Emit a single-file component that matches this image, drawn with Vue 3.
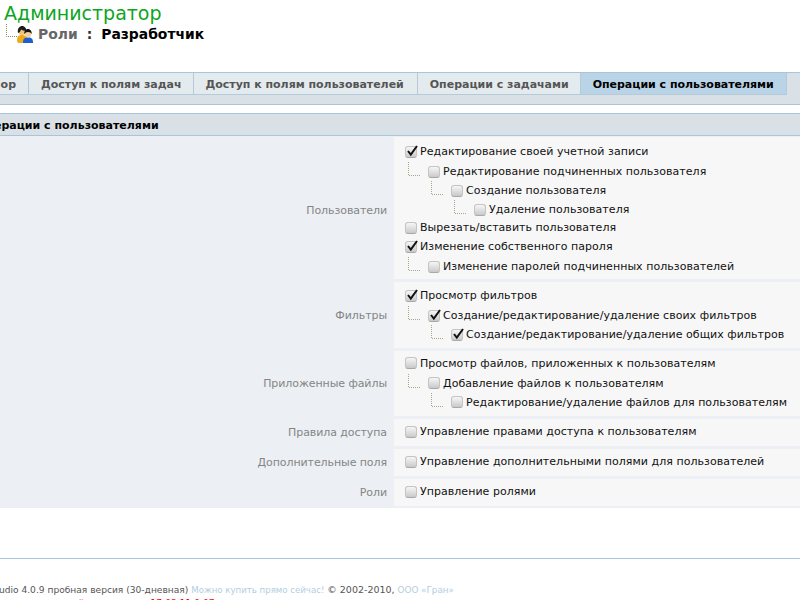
<script setup>
const tabs = [
  { label: 'ор', cls: 'first' },
  { label: 'Доступ к полям задач', cls: 'narrow' },
  { label: 'Доступ к полям пользователей', cls: 'wide' },
  { label: 'Операции с задачами', cls: 'narrow' },
  { label: 'Операции с пользователями', cls: 'active' },
]
const groups = [
  { label: 'Пользователи', h: 142, cls: 'tall', items: [
    { t: 'Редактирование своей учетной записи', l: 0, c: true },
    { t: 'Редактирование подчиненных пользователя', l: 1 },
    { t: 'Создание пользователя', l: 2 },
    { t: 'Удаление пользователя', l: 3 },
    { t: 'Вырезать/вставить пользователя', l: 0 },
    { t: 'Изменение собственного пароля', l: 0, c: true },
    { t: 'Изменение паролей подчиненных пользователей', l: 1 },
  ]},
  { label: 'Фильтры', h: 66, items: [
    { t: 'Просмотр фильтров', l: 0, c: true },
    { t: 'Создание/редактирование/удаление своих фильтров', l: 1, c: true },
    { t: 'Создание/редактирование/удаление общих фильтров', l: 2, c: true },
  ]},
  { label: 'Приложенные файлы', h: 65, cls: 'low', items: [
    { t: 'Просмотр файлов, приложенных к пользователям', l: 0 },
    { t: 'Добавление файлов к пользователям', l: 1 },
    { t: 'Редактирование/удаление файлов для пользователям', l: 2 },
  ]},
  { label: 'Правила доступа', h: 27, cls: 'low', items: [{ t: 'Управление правами доступа к пользователям', l: 0 }] },
  { label: 'Дополнительные поля', h: 27, cls: 'low', items: [{ t: 'Управление дополнительными полями для пользователей', l: 0 }] },
  { label: 'Роли', h: 27, cls: 'low', items: [{ t: 'Управление ролями', l: 0 }] },
]
</script>

<template>
  <div class="page">
    <header class="head">
      <h1 class="title">Администратор</h1>
      <div class="crumb">
        <svg class="elbow" width="12" height="13" viewBox="0 0 12 13"><path d="M.5 0v12.500H12" fill="none" stroke="#8a8a70" stroke-dasharray="1 1"/></svg>
        <svg class="roles" width="16" height="17" viewBox="0 0 16 17">
          <path d="M0 15c0-4 1-6 5-6s5 2 5 6l-1 2H1z" fill="#f0ac18"/>
          <circle cx="5" cy="5.500" r="3.500" fill="#f5c27a"/>
          <path d="M1 7C0 2 3 0 5 0s5 2 4 5C7 5 5 4 4 3.500 3.500 5 3 6.500 1 7z" fill="#1c1c1c"/>
          <path d="M6 17c0-4 1-5.500 5-5.500s5 1.500 5 5.500z" fill="#1d5fd0"/>
          <circle cx="11" cy="8" r="3.200" fill="#f7cf9a"/>
          <path d="M7.300 8c-.3-3.500 2-5 3.700-5s4 1.500 3.700 5c-1-1.300-1.500-2-3.700-2S8.500 6.700 7.300 8z" fill="#111"/>
        </svg>
        <span class="crumb-link">Роли</span>
        <span class="crumb-sep">:</span>
        <span class="crumb-cur">Разработчик</span>
      </div>
    </header>

    <nav class="tabbar">
      <div class="tabs">
        <div v-for="t in tabs" :key="t.label" class="tab" :class="t.cls">{{ t.label }}</div>
      </div>
    </nav>

    <section class="panel">
      <h2 class="panel-title"><span class="panel-text">Операции с пользователями</span></h2>
      <div class="groups">
        <div v-for="g in groups" :key="g.label" class="group" :class="g.cls" :style="{ height: g.h + 'px' }">
          <div class="glabel">{{ g.label }}</div>
          <div class="gitems">
            <div v-for="i in g.items" :key="i.t" class="item" :class="'lvl' + i.l">
              <svg v-if="i.l" class="tree" width="12" height="14" viewBox="0 0 12 14"><path d="M.5 0v13.500H12" fill="none" stroke="#a8a888" stroke-dasharray="1 1"/></svg>
              <span class="box">
                <svg v-if="i.c" class="tick" width="12" height="12" viewBox="0 0 12 12"><path d="M2 6l2.800 3.500L11 1" fill="none" stroke="#111" stroke-width="2"/></svg>
              </span>
              <span class="itext">{{ i.t }}</span>
            </div>
          </div>
        </div>
      </div>
    </section>

    <footer class="foot">
      <div class="fline"><span class="shift">BPMStudio 4.0.9 пробная версия (30-дневная)</span> <a class="flink">Можно купить прямо сейчас!</a> <span class="copy">© 2002-2010,</span> <a class="flink wide">ООО «Гран»</a></div>
      <div class="fred">текущий час сервера: 17:03:11 0:07</div>
    </footer>
  </div>
</template>

<style>
html, body { margin: 0; background: #fff; }
</style>

<style scoped>
.page {
  width: 800px;
  height: 600px;
  overflow: hidden;
  font-family: "DejaVu Sans", sans-serif;
  font-size: 11px;
  color: #111;
  background: #fff;
}
.head { height: 72px; padding-left: 4px; box-sizing: border-box; }
.title {
  margin: 0;
  padding-top: 2px;
  font-size: 19px;
  font-weight: normal;
  line-height: 23px;
  color: #0ca51e;
}
.crumb { display: flex; align-items: center; height: 19px; padding-left: 2px; margin-top: -1px; }
.elbow { margin-top: -7px; flex: none; margin-right: -1px; }
.roles { flex: none; margin-right: 5px; margin-top: 2px; }
.crumb-link { font-size: 13.9px; font-weight: bold; color: #666; }
.crumb-sep { font-size: 13.9px; font-weight: bold; color: #333; margin: 0 9px; }
.crumb-cur { font-size: 13.9px; font-weight: bold; color: #000; }

.tabbar { background: #dae1e6; border-top: 1px solid #a7c6dc; border-bottom: 1px solid #a7c6dc; height: 31px; }
.tabs { display: flex; margin-left: -60px; height: 22px; }
.tab {
  padding: 0 12px;
  line-height: 23px;
  font-weight: bold;
  letter-spacing: -0.02px;
  color: #555;
  background: #e4ebef;
  border-right: 1px solid #b4c9da;
  border-bottom: 1px solid #b4c9da;
  white-space: nowrap;
}
.tab.first { width: 64px; text-align: right; }
.tab.narrow { padding-right: 11px; }
.tab.wide { padding-right: 13px; }
.tab.active { background: #b9d4e6; color: #000; }

.panel { margin-top: 8px; }
.panel-title {
  margin: 0;
  height: 21px;
  background: #dae1e6;
  border-top: 1px solid #a7c6dc;
  border-bottom: 1px solid #a7c6dc;
  font-size: 11px;
  line-height: 23px;
  font-weight: bold;
  color: #000;
  white-space: nowrap;
}
.panel-text { margin-left: -23px; display: inline-block; }
.groups { display: flex; flex-direction: column; gap: 3px; padding: 1px 0 2px; background: #ecf0f4; }
.group { display: flex; }
.glabel { width: 387px; text-align: right; align-self: center; color: #858585; flex: none; letter-spacing: -0.08px; }
.tall .glabel { margin-top: 4px; }
.gitems { flex: 1; display: flex; flex-direction: column; justify-content: center; margin-left: 7px; background: #f7f7f7; padding-left: 11px; }
.tall .gitems { padding-top: 2px; }
.low .gitems { padding-bottom: 2px; }
.item { display: flex; align-items: center; height: 19px; flex: none; white-space: nowrap; position: relative; letter-spacing: 0.04px; }
.lvl1 { padding-left: 23px; margin-top: 1px; }
.lvl2 { padding-left: 46px; }
.lvl3 { padding-left: 69px; }
.lvl3 + .lvl0 { margin-top: -1px; }
.tree { position: absolute; top: 0; }
.lvl1 .tree { left: 3px; }
.lvl2 .tree { left: 26px; }
.lvl3 .tree { left: 49px; }
.box {
  position: relative;
  width: 10px;
  height: 10px;
  flex: none;
  margin-right: 3px;
  border: 1px solid #c4c4c4;
  border-bottom-color: #a8a8a8;
  border-radius: 3px;
  background: linear-gradient(#f6f6f6, #c9c9c9);
}
.tick { position: absolute; left: 0; top: -2px; }
.itext { color: #111; }

.foot { margin-top: 50px; border-top: 1px solid #a7c6dc; padding-top: 24px; font-size: 9.1px; color: #555; white-space: nowrap; }
.fline { line-height: 13px; }
.shift { margin-left: -30px; }
.flink { color: #b4cde0; font-size: 8.6px; }
.flink.wide { font-size: 8.8px; }
.copy { font-size: 9.5px; }
.fred { margin-left: 42px; color: #f00; line-height: 13px; }
</style>
